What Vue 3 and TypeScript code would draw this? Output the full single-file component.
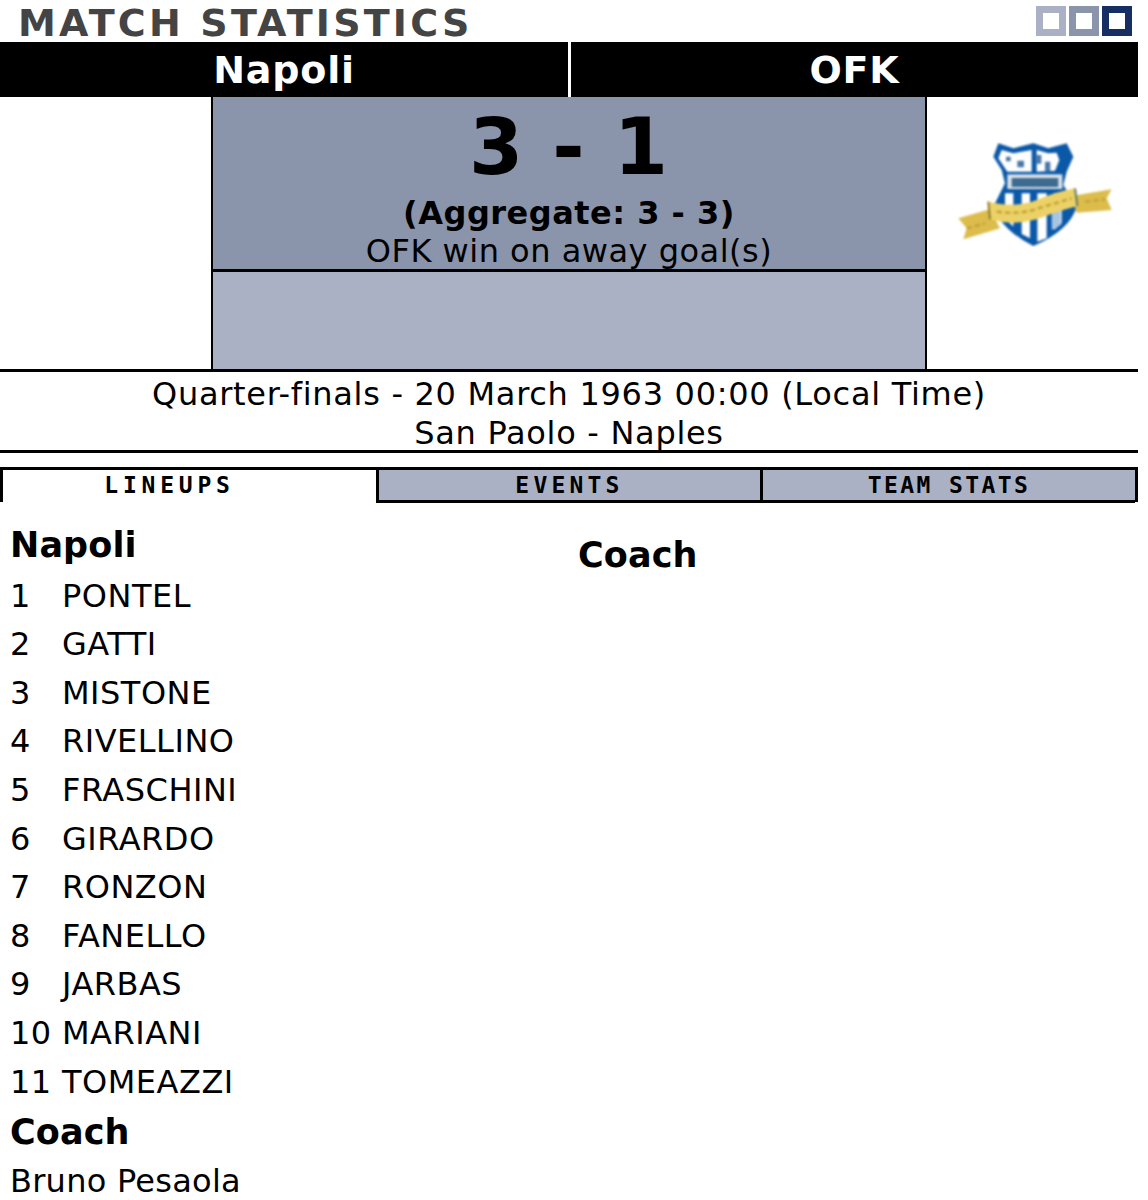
<template>
	<div class="match">
		<header class="match__title">
			<h1>MATCH STATISTICS</h1>
			<div class="match__sizes">
				<span v-for="colour in sizeColours" :key="colour" class="match__size" :style="{ borderColor: colour }" />
			</div>
		</header>

		<div class="match__teams">
			<div>Napoli</div>
			<div>OFK</div>
		</div>

		<div class="match__score-row">
			<div class="match__crest" />
			<div class="match__score">
				<div class="match__result">
					<div class="match__goals">3 - 1</div>
					<div class="match__aggregate">(Aggregate: 3 - 3)</div>
					<div class="match__note">OFK win on away goal(s)</div>
				</div>
				<div class="match__scorers" />
			</div>
			<div class="match__crest">
				<svg width="160" height="106" viewBox="69 33 480 318">
					<g class="match__logo">
						<path d="M205 40 L250 55 L310 40 L355 55 L410 40 L430 80 L410 125 L400 165 L440 230 Q420 300 310 348 Q215 300 190 230 L225 160 L215 120 L190 80 Z" fill="#0a58a8" />
						<path d="M215 60 L250 70 L305 60 L305 125 L232 125 L205 85 Z" fill="#fff" />
						<path d="M320 60 L355 70 L380 68 L388 90 L375 122 L320 125 Z" fill="#fff" />
						<path d="M228 80 h14 v14 h-14 Z M262 92 h20 v20 h-20 Z M320 75 h14 v26 h-14 Z M345 95 h16 v28 h-16 Z" fill="#4a78a8" />
						<rect x="232" y="133" width="165" height="44" fill="#dde2e8" />
						<rect x="245" y="144" width="140" height="27" fill="#3c6a90" />
						<path d="M225 190 H250 V290 L225 265 Z M275 190 H300 V325 L275 312 Z M322 190 H350 V325 L322 335 Z M372 190 H395 V280 L372 300 Z" fill="#fff" />
						<path d="M365 240 H392 V285 L365 300 Z" fill="#a8c4e4" />
						<path d="M85 265 L180 238 L210 295 L100 328 L110 295 Z" fill="#dcbc4a" />
						<path d="M425 198 L545 178 L530 205 L545 240 L440 248 Z" fill="#dcbc4a" />
						<path d="M175 215 Q260 235 320 210 Q380 185 435 175 L442 228 Q385 243 320 268 Q250 288 180 268 Z" fill="#ecd266" />
						<path d="M200 245 Q270 255 325 235 L425 205 M110 295 L165 280 M465 215 L525 208" fill="none" stroke="#c4a43c" stroke-width="8" stroke-dasharray="16 9" />
						<path d="M175 215 L180 268" fill="none" stroke="#8c7a2c" stroke-width="6" />
						<path d="M435 175 L442 228" fill="none" stroke="#5f7a6a" stroke-width="6" />
					</g>
				</svg>
			</div>
		</div>

		<div class="match__info">
			<div>Quarter-finals - 20 March 1963 00:00 (Local Time)</div>
			<div>San Paolo - Naples</div>
		</div>

		<nav class="match__tabs">
			<div v-for="(tab, index) in tabs"
				:key="tab"
				class="match__tab"
				:class="{ 'match__tab--active': index === 0 }">
				{{ tab }}
			</div>
		</nav>

		<div class="match__lineups">
			<div class="match__column">
				<h2>Napoli</h2>
				<div v-for="(player, index) in players" :key="player" class="match__player">
					<span class="match__number">{{ index + 1 }}</span>
					<span>{{ player }}</span>
				</div>
				<h2 class="match__coach">Coach</h2>
				<div class="match__coach-name">Bruno Pesaola</div>
			</div>
			<div class="match__column match__column--away">
				<h2>Coach</h2>
			</div>
		</div>
	</div>
</template>

<script setup lang="ts">
const sizeColours = ['#abb1c4', '#8a94ab', '#152e63']
const tabs = ['LINEUPS', 'EVENTS', 'TEAM STATS']
const players = [
	'PONTEL',
	'GATTI',
	'MISTONE',
	'RIVELLINO',
	'FRASCHINI',
	'GIRARDO',
	'RONZON',
	'FANELLO',
	'JARBAS',
	'MARIANI',
	'TOMEAZZI',
]
</script>

<style>
body {
	background: #fff;
}
</style>

<style scoped>
.match {
	width: 1138px;
	color: #000;
	font-family: "DejaVu Sans", sans-serif;
	font-size: 32px;
	letter-spacing: 0.5px;
}

.match__title {
	display: flex;
	justify-content: space-between;
	height: 42px;
	padding: 6px 6px 0 18px;
	box-sizing: border-box;
}

.match__title h1 {
	margin: 0;
	color: #444;
	font-family: "DejaVu Sans", sans-serif;
	font-size: 38px;
	font-weight: 700;
	line-height: 34px;
	letter-spacing: 3.2px;
}

.match__sizes {
	display: flex;
	gap: 3px;
	height: 30px;
}

.match__size {
	width: 30px;
	height: 30px;
	box-sizing: border-box;
	border: 7px solid;
	background: #fff;
}

.match__teams {
	display: grid;
	grid-template-columns: 571px 1fr;
	height: 55px;
	background: #000;
	color: #fff;
	font-size: 38px;
	font-weight: 700;
	line-height: 56px;
	letter-spacing: 0.8px;
	text-align: center;
}

.match__teams div:first-child {
	border-right: 3px solid #fff;
}

.match__score-row {
	display: grid;
	grid-template-columns: 211px 716px 1fr;
	height: 275px;
	box-sizing: border-box;
	border-bottom: 3px solid #000;
}

.match__crest {
	display: flex;
	justify-content: center;
	padding-top: 44px;
}

.match__score {
	display: flex;
	flex-direction: column;
	border: solid #000;
	border-width: 0 2px;
	text-align: center;
}

.match__result {
	height: 172px;
	background: #8a94ab;
	border-bottom: 3px solid #000;
	overflow: hidden;
}

.match__goals {
	font-size: 78px;
	font-weight: 700;
	line-height: 96px;
	padding-top: 2px;
	letter-spacing: 1px;
}

.match__aggregate {
	font-weight: 700;
	line-height: 37px;
}

.match__note {
	line-height: 39px;
}

.match__scorers {
	flex: 1;
	background: #abb1c4;
}

.match__info {
	height: 81px;
	box-sizing: border-box;
	padding-top: 3px;
	border-bottom: 3px solid #000;
	line-height: 39px;
	letter-spacing: 0.7px;
	text-align: center;
}

.match__tabs {
	display: grid;
	grid-template-columns: 373px 384px 1fr;
	height: 35px;
	margin-top: 14px;
	box-sizing: border-box;
	border: solid #000;
	border-width: 3px 3px 0;
	font-family: "DejaVu Sans Mono", monospace;
	font-size: 23px;
	font-weight: 700;
	line-height: 30px;
	text-align: center;
}

.match__tab {
	background: #abb1c4;
	border-bottom: 3px solid #000;
	border-left: 3px solid #000;
	letter-spacing: 4.2px;
}

.match__tab:last-child {
	letter-spacing: 2.4px;
}

.match__tab--active {
	padding-right: 40px;
	background: #fff;
	border-bottom: 0;
	border-left: 0;
	border-right: 0;
	letter-spacing: 4.8px;
}

.match__lineups {
	display: grid;
	grid-template-columns: 568px 1fr;
	padding-left: 10px;
}

.match__column {
	padding-top: 22px;
}

.match__column--away {
	padding-top: 32px;
}

.match__column h2 {
	margin: 0;
	font-size: 35px;
	font-weight: 700;
	line-height: 42px;
	letter-spacing: 0.1px;
}

.match__player {
	display: flex;
	height: 48.6px;
	align-items: center;
}

.match__player:first-of-type {
	margin-top: 5.4px;
}

.match__number {
	width: 52px;
}

.match__coach {
	margin-top: 5px !important;
}

.match__coach-name {
	margin-top: 13px;
	line-height: 30px;
	letter-spacing: 0.25px;
}

.match__logo {
	filter: blur(2.5px);
}
</style>
